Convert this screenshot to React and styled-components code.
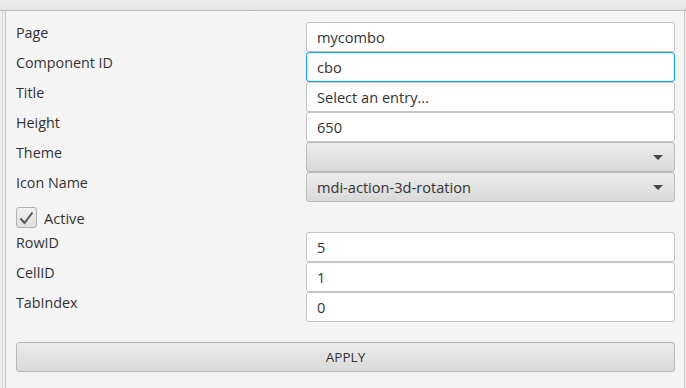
import React from "react";
import styled, { createGlobalStyle } from "styled-components";

const Global = createGlobalStyle`
  html, body { margin: 0; padding: 0; background: #f4f4f4; }
  body { font-family: "Open Sans", "Noto Sans", sans-serif; color: #333; }
  * { box-sizing: border-box; }
`;

const Window = styled.div`
  width: 686px;
  height: 388px;
  display: flex;
  flex-direction: column;
  background: #f4f4f4;
  overflow: hidden;
`;

const TopBar = styled.div`
  height: 11px;
  flex: none;
  background: linear-gradient(#ececec, #e4e4e4);
  border-bottom: 1px solid #b9b9b9;
`;

const Outer = styled.div`
  flex: 1;
  display: flex;
  padding-left: 2px;
  background: #f0f0f0;
`;

const OuterLine = styled.div`
  flex: 1;
  display: flex;
  border-left: 1px solid #d2d2d2;
  padding-left: 2px;
`;

const Panel = styled.div`
  flex: 1;
  border-left: 1px solid #c4c4c4;
  border-right: 1px solid #c8c8c8;
  background: #f4f4f4;
  margin-right: 1px;
  padding: 11px 9px 0 10px;
  display: flex;
  flex-direction: column;
`;

const Form = styled.div`
  display: grid;
  grid-template-columns: 290px 1fr;
  grid-auto-rows: 30px;
`;

const Label = styled.div`
  font-size: 14.3px;
  line-height: 18px;
  padding-top: 2px;
  color: #333;
  white-space: nowrap;
`;

const Field = styled.div`
  height: 30px;
  background: #fff;
  border: 1px solid ${(p) => (p.$focused ? "#1fa3dc" : "#c4c4c4")};
  border-radius: 3px;
  box-shadow: ${(p) => (p.$focused ? "inset 0 0 0 1px #d6eefa" : "none")};
  padding: 0 10px;
  display: flex;
  align-items: center;
  font-size: 14.6px;
  color: #333;
  white-space: nowrap;
`;

const Combo = styled.div`
  height: 30px;
  border: 1px solid #b9b9b9;
  border-radius: 3px;
  background: linear-gradient(#ececec, #d9d9d9);
  padding: 0 11px 0 10px;
  display: flex;
  align-items: center;
  justify-content: space-between;
  font-size: 14.6px;
  color: #333;
`;

const Arrow = styled.span`
  width: 0;
  height: 0;
  border-left: 5px solid transparent;
  border-right: 5px solid transparent;
  border-top: 5px solid #444;
`;

const CheckRow = styled.label`
  grid-column: 1 / span 2;
  display: flex;
  align-items: center;
  gap: 7px;
  font-size: 14.6px;
  padding-top: 1px;
  height: 30px;
`;

const Box = styled.span`
  width: 21px;
  height: 21px;
  border: 1px solid #b0b0b0;
  border-radius: 3px;
  background: linear-gradient(#f1f1f1, #dedede);
  display: flex;
  align-items: center;
  justify-content: center;
`;

const ApplyButton = styled.button`
  margin-top: 20px;
  height: 30px;
  width: 100%;
  border: 1px solid #b5b5b5;
  border-radius: 3px;
  background: linear-gradient(#ececec, #d9d9d9);
  font-family: "Open Sans", "Noto Sans", sans-serif;
  font-size: 13.5px;
  color: #333;
  padding: 0;
`;

export default function App() {
  const top = [
    ["Page", "mycombo"],
    ["Component ID", "cbo", true],
    ["Title", "Select an entry..."],
    ["Height", "650"],
  ];
  const bottom = [
    ["RowID", "5"],
    ["CellID", "1"],
    ["TabIndex", "0"],
  ];
  return (
    <Window>
      <Global />
      <TopBar />
      <Outer>
        <OuterLine>
          <Panel>
            <Form>
              {top.map(([l, v, f]) => (
                <React.Fragment key={l}>
                  <Label>{l}</Label>
                  <Field $focused={f}>{v}</Field>
                </React.Fragment>
              ))}
              <Label>Theme</Label>
              <Combo>
                <span />
                <Arrow />
              </Combo>
              <Label>Icon Name</Label>
              <Combo>
                <span>mdi-action-3d-rotation</span>
                <Arrow />
              </Combo>
              <CheckRow>
                <Box>
                  <svg width="15" height="14" viewBox="0 0 15 14">
                    <path d="M1.5 7.5 L5.5 12 L13.5 1.5" fill="none" stroke="#555" strokeWidth="2" />
                  </svg>
                </Box>
                Active
              </CheckRow>
              {bottom.map(([l, v]) => (
                <React.Fragment key={l}>
                  <Label>{l}</Label>
                  <Field>{v}</Field>
                </React.Fragment>
              ))}
            </Form>
            <ApplyButton>APPLY</ApplyButton>
          </Panel>
        </OuterLine>
      </Outer>
    </Window>
  );
}
